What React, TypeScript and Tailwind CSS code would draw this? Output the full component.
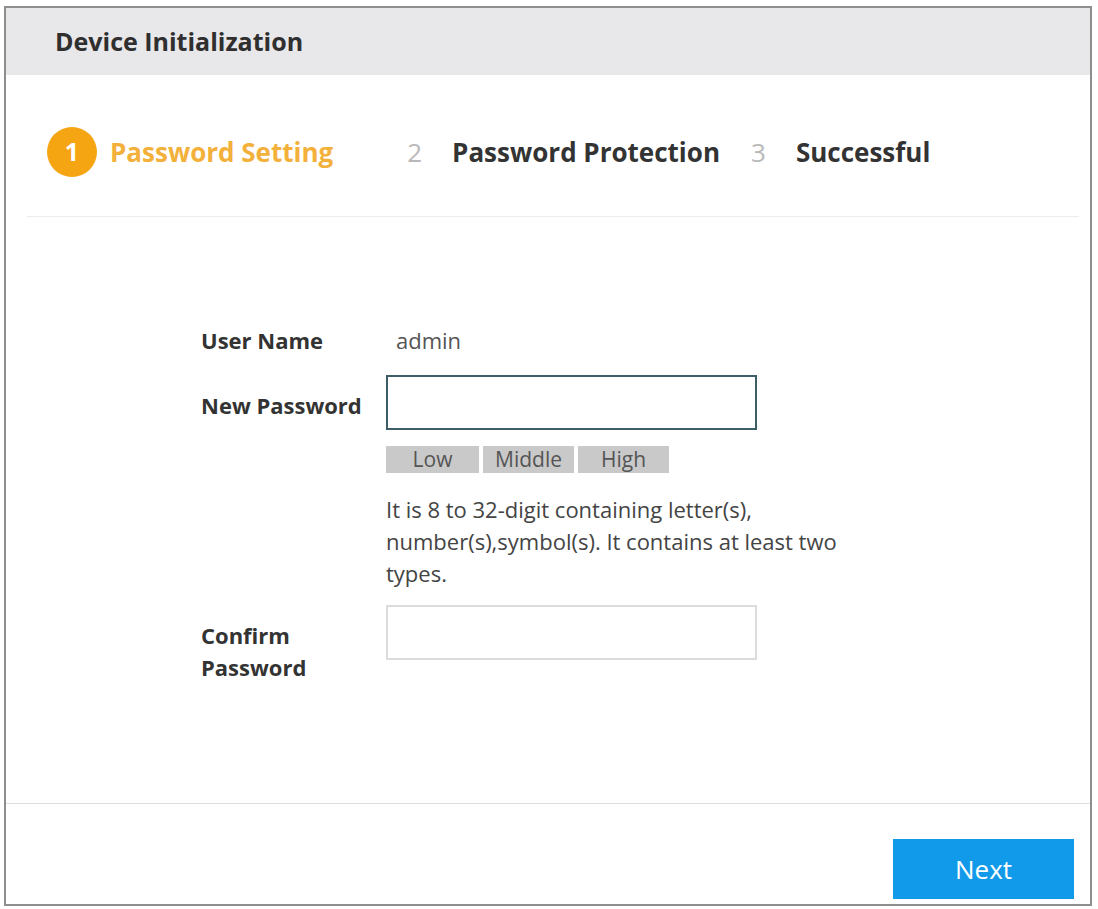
const font = { fontFamily: '"Open Sans", "Noto Sans", Arial, sans-serif' };

function Step({ n, label, active }: { n: number; label: string; active?: boolean }) {
  if (active) {
    return (
      <div className="flex items-center gap-[13px]">
        <span className="flex h-[50px] w-[50px] items-center justify-center rounded-full bg-[#f5a511] text-[25px] font-bold text-white">
          {n}
        </span>
        <span className="text-[26px] font-bold text-[#f3b13c]">{label}</span>
      </div>
    );
  }
  return (
    <div className="flex items-center gap-[30px]">
      <span className="text-[26px] text-[#b9b9b9]">{n}</span>
      <span className="text-[26px] font-bold text-[#333333]">{label}</span>
    </div>
  );
}

export default function App() {
  return (
    <div className="min-h-[909px] bg-white pl-[4px] pt-[6px]" style={font}>
      <div className="flex h-[900px] w-[1088px] flex-col border-2 border-[#8e8e8e] bg-white">
        <div className="flex h-[67px] shrink-0 items-center bg-[#e8e7ea] pl-[49px]">
          <h1 className="text-[25px] font-bold text-[#2f2f2f]">Device Initialization</h1>
        </div>

        <div className="flex-1">
          <div className="mt-[52px] flex h-[50px] items-center gap-[74px] pl-[41px]">
            <Step n={1} label="Password Setting" active />
            <div className="flex items-center gap-[31px]">
              <Step n={2} label="Password Protection" />
              <Step n={3} label="Successful" />
            </div>
          </div>
          <div className="ml-[21px] mr-[11px] mt-[39px] h-px bg-[#ececec]" />

          <div className="pl-[195px] text-[22px]">
            <div className="mt-[107px] flex h-[32px] items-center">
              <span className="w-[185px] font-bold text-[#333333]">User Name</span>
              <span className="pl-[10px] text-[#555555]">admin</span>
            </div>

            <div className="mt-[19px] flex items-center">
              <span className="mt-[6px] w-[185px] font-bold text-[#333333]">New Password</span>
              <input
                type="password"
                className="h-[55px] w-[371px] border-2 border-[#3d5e66] bg-white px-2 outline-none"
              />
            </div>

            <div className="ml-[185px] mt-[16px] flex h-[27px] gap-[4px] text-[21px] leading-[27px] text-[#555555]">
              <span className="w-[93px] bg-[#c9c9c9] text-center">Low</span>
              <span className="w-[91px] bg-[#c9c9c9] text-center">Middle</span>
              <span className="w-[91px] bg-[#c9c9c9] text-center">High</span>
            </div>

            <p className="ml-[185px] mt-[20px] w-[480px] leading-[32px] text-[#444444]">
              It is 8 to 32-digit containing letter(s), number(s),symbol(s). It contains at least two types.
            </p>

            <div className="mt-[16px] flex items-start">
              <span className="w-[185px] pt-[14px] font-bold leading-[32px] text-[#333333]">
                Confirm Password
              </span>
              <input
                type="password"
                className="h-[55px] w-[371px] border-2 border-[#dcdcdc] bg-white px-2 outline-none"
              />
            </div>
          </div>
        </div>

        <div className="flex h-[101px] shrink-0 items-start justify-end border-t border-[#dddddd] pr-[16px] pt-[35px]">
          <button className="h-[60px] w-[181px] bg-[#129aea] text-[26px] text-white">Next</button>
        </div>
      </div>
    </div>
  );
}
